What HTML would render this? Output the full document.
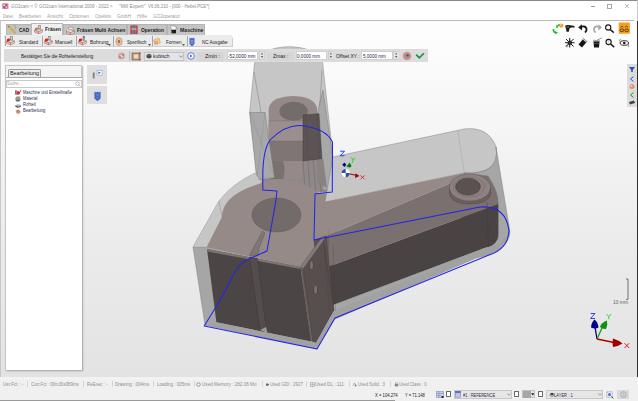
<!DOCTYPE html>
<html><head><meta charset="utf-8">
<style>
*{margin:0;padding:0;box-sizing:border-box}
html,body{width:638px;height:401px;overflow:hidden;background:#f0f0f0}
body{font-family:"Liberation Sans",sans-serif;position:relative;color:#333}
.a{position:absolute}
.t{position:absolute;white-space:nowrap;line-height:1;transform-origin:0 0}
.tab{position:absolute;top:24px;height:10.5px;background:#c4c4c4;border:0.7px solid #b4b4b4;border-bottom:none}
.sep{position:absolute;width:1px;background:#a8a8a8}
.ss{position:absolute;top:381px;width:1px;height:6px;background:#d6d6d6}
</style></head><body>
<!-- window top border -->
<div class="a" style="left:0;top:0;width:638px;height:1px;background:#8a8a8a"></div>
<div class="a" style="left:0;top:1px;width:638px;height:20px;background:#fff"></div>
<svg class="a" style="left:2.2px;top:2.5px" width="6.6" height="6.6" viewBox="0 0 6.6 6.6"><rect x="0" y="0" width="6.6" height="6.6" rx="1.2" fill="#e8a0a0"/><rect x="1.2" y="1.2" width="4.2" height="4.2" fill="#a050a0"/><rect x="1.5" y="1.6" width="1.6" height="1.4" fill="#fff"/><rect x="3.5" y="3.4" width="1.5" height="1.5" fill="#f0d0f0"/></svg>
<div class="a" style="left:591px;top:6px;width:4px;height:1px;background:#a0a0a0"></div>
<div class="a" style="left:607px;top:4px;width:5px;height:5px;border:1px solid #a8a8a8"></div>
<svg class="a" style="left:624px;top:3.3px" width="6" height="6" viewBox="0 0 6 6"><path d="M1,1 L5,5 M5,1 L1,5" stroke="#a0a0a0" stroke-width="0.7"/></svg>
<div class="a" style="left:636.5px;top:0;width:1px;height:21px;background:#c8c8c8"></div>
<div class="a" style="left:0;top:20px;width:634px;height:1.2px;background:#bcbcbc"></div>
<!-- VIEWPORT -->
<div class="a" style="left:1px;top:21px;width:636px;height:356px;background:linear-gradient(#fefefe 0%,#fafafa 15%,#ececec 60%,#e3e3e3 100%)"></div>
<div class="a" style="left:0;top:21px;width:1px;height:356px;background:#c8c8c8"></div>
<div class="a" style="left:637px;top:21px;width:1px;height:356px;background:#303030"></div>

<!-- 3D MODEL -->
<svg class="a" style="left:0;top:0" width="638" height="401" viewBox="0 0 638 401">
<g stroke-linejoin="round">
<!-- underlay -->
<path d="M258,182 L334,157 L340,250 L300,267 Z" fill="#968a89"/>
<!-- tower envelope -->
<path d="M249.7,112.5 L254,68 C254,40 323,40 323,66 L333,157 L331,195 L258,182 Z" fill="#c6c6c6" stroke="#7a7a7a" stroke-width="0.45"/>
<!-- tower brown boss -->
<path d="M268.7,121 L268.7,108 Q271,97 292,96 Q314,96 317,108 L317,180 L268.7,180 Z" fill="#958a89"/>
<ellipse cx="293.6" cy="111.3" rx="14.2" ry="9.5" fill="#746c6b"/>
<rect x="268.7" y="120.8" width="48.6" height="20.2" fill="#9a8f8e"/>
<rect x="268.7" y="141" width="48.6" height="20" fill="#7e7574"/>
<path d="M268.7,161 L317.3,161 L317.3,180 L268.7,180 Z" fill="#968a89"/>
<path d="M271,161 L283,161 Q286,170 283,180 L271,180 Z" fill="#7a706f"/>

<path d="M268.7,120.8 L317.3,120.8 M268.7,141 L317.3,141" stroke="#6f6564" stroke-width="0.4"/>
<path d="M262,179 L331,179 L331,193 L262,186 Z" fill="#8e8888"/>
<path d="M302,161 L331,157 L331,193 L302,190 Z" fill="#8e8888"/>
<path d="M303,161 L305,190 M308,161 L310,192 M313,160 L316,193 M318,160 L321,193" stroke="#5a5a5a" stroke-width="0.35"/>
<!-- tower side walls -->
<path d="M254,72 L265,135 M322,70 L319.5,112 M320,100 L325,160" stroke="#6a6a6a" stroke-width="0.4"/>
<path d="M249.7,112.5 L265,112.5 L274.6,177.7 L256.8,180 Z" fill="#a8a8a8" stroke="#6a6a6a" stroke-width="0.4"/>
<path d="M249.7,112.5 L274.6,177.7 M265,112.5 L256.8,180" stroke="#777" stroke-width="0.35" stroke-dasharray="1.2 0.8"/>
<path d="M317.3,113.7 L323,90 L332.7,157 L331,190 L323,190 Z" fill="#a8a8a8" stroke="#6a6a6a" stroke-width="0.4"/>
<path d="M303,114.9 L319,113.7 L322,158.7 L303,161 Z" fill="#5c5454" stroke="#3a3434" stroke-width="0.4"/>
<path d="M306,115 L308,160 M317,114 L319.5,159" stroke="#3a3434" stroke-width="0.3" stroke-dasharray="1 0.8"/>
<path d="M317.3,161 L323.2,158.7 L327,188 L317.3,182 Z" fill="#8a8282"/>

<!-- right arm envelope top face -->
<path d="M333,157 L464,129 Q488,126 496,146.8 Q498.5,160 490.5,167.3 Q482,174 464,173 L325,202 Z" fill="#c6c6c6" stroke="#7a7a7a" stroke-width="0.45"/>
<path d="M457.8,130.9 L464.3,173" stroke="#777" stroke-width="0.35" stroke-dasharray="1.2 0.8"/>
<!-- right arm brown faces -->
<path d="M464,174 Q482,175 490.5,168 L497,161 L500,240 L460,240 Z" fill="#7a706f"/>
<path d="M312,236 L334,228 L334,315 L312,315 Z" fill="#6d6261"/>
<path d="M312,194 L325,202 L329,235 L314,240 Z" fill="#968a89"/>
<path d="M325,202 L464,173 Q482,174 490.5,167.3 L492,172 L458,180 L329,235 Z" fill="#968a89"/>
<path d="M329,235 L458,180 L490,176 Q498,190 498.5,204 L329,266.4 Z" fill="#7a706f"/>
<path d="M329,266.4 L498.5,204 L498.5,234 Q498,246 485,248 L328,307 L322,290 Z" fill="#4a4343"/>
<path d="M487,202 L488.5,249" stroke="#3a3434" stroke-width="0.4"/>
<!-- arm end envelope side -->
<path d="M496,146.8 L510,232 Q508,252 476,258 L335,319 L328,307 L485,248 Q498.5,246 498.5,234 L498.5,204 Q498,190 488,176 L464,173 Q482,174 490.5,167.3 Q498.5,160 496,146.8 Z" fill="#a6a6a6" stroke="#7a7a7a" stroke-width="0.45"/>
<!-- right hub boss -->
<path d="M449.5,188 L449.5,195 Q453,204 470,204 Q487,204 490.5,195 L490.5,188 Z" fill="#6a5f5e" stroke="#4a4242" stroke-width="0.4"/>
<ellipse cx="470" cy="187.5" rx="20.5" ry="13.5" fill="#8e8281" stroke="#5a5050" stroke-width="0.45"/>
<ellipse cx="469" cy="187" rx="15.5" ry="10" fill="none" stroke="#6a6060" stroke-width="0.4"/>
<ellipse cx="468" cy="186.8" rx="12.5" ry="8.5" fill="#5a5251" stroke="#4a4242" stroke-width="0.45"/>

<!-- left block envelope -->
<path d="M193,247 L219,201 Q232,184 255,173 L262,183 L300,267 L311,341.5 L317,349 L205,325 Z" fill="#a6a6a6" stroke="#7a7a7a" stroke-width="0.45"/>
<path d="M219,201 Q232,184 255,173 L262,183.7 Q222,195 222,217 L206.7,247.3 L193,247.3 Z" fill="#c6c6c6"/>
<path d="M219,201 L222,217 M193,247.3 L206.7,247.3" stroke="#7a7a7a" stroke-width="0.4"/>
<!-- left block brown top face -->
<path d="M206.7,247.3 L222,217 Q222,195 260,183.4 Q270,180 285,180 Q318,184 326,205 Q330,215 323,236 L300,267 Z" fill="#968a89"/>
<ellipse cx="276.5" cy="215" rx="24.5" ry="17" fill="#736b6a" stroke="#5e5655" stroke-width="0.45"/>
<!-- front dark faces -->
<path d="M207,249 L300.4,267 L311,341.5 L216.4,322.3 Z" fill="#4c4545"/>
<path d="M207,249 L300.4,267 L300.6,269 L207.5,251.5 Z" fill="#7d7574"/>
<path d="M249.4,257 L257.5,258.5 L266,327 L260,330 Z" fill="#554d4d" stroke="#383232" stroke-width="0.4"/>
<path d="M260,330 L266,327 L267.5,333 Z" fill="#9a9a9a"/>
<path d="M249.5,255.5 L258,256 L259,248 L265,233 L262.5,231 Z" fill="#7f7776" stroke="#5a5252" stroke-width="0.45"/>
<path d="M314,240 L326,236 L334,311 L320,315 Z" fill="#5a5251" stroke="#3e3838" stroke-width="0.35"/>
<path d="M300.5,267 L323,236 L333.7,311 L316,343 L311,341 Z" fill="#574f4e" stroke="#3e3838" stroke-width="0.35"/>
<path d="M300.5,267 L323,236 L324.8,238.5 L303,268.8 Z" fill="#837979"/>
<ellipse cx="311.5" cy="265" rx="2" ry="4.5" fill="#7a7170" stroke="#2e2828" stroke-width="0.45"/>
<ellipse cx="315.6" cy="289.6" rx="2" ry="4.6" fill="#7a7170" stroke="#2e2828" stroke-width="0.45"/>
<path d="M304,270 L313,342 M324,243 L330,314 M333,245 L335.5,312" stroke="#3e3838" stroke-width="0.35" stroke-dasharray="1.2 0.8"/><path d="M301.5,268.5 L311.8,341" stroke="#8a8282" stroke-width="0.5"/>
<!-- bottom band -->
<path d="M205,325 L216.4,322.3 L311,341.5 L316,343 L333.7,311 L485,248 Q500,246 510,232 Q508,252 476,258 L335,319 L317,349 Z" fill="#a1a1a1"/>

<!-- blue contour -->
<path d="M204.2,326 L220.4,299.8 L236,270 Q241,262 250,258.5 L267,251 L276,200 L277,191 L262.8,190 L262.8,175 Q263,150 270,140 Q285,125 300,125.5 Q326,128 332.5,142 L332.3,192 L315,194 L314,240 L480,207 Q506,205 509,231 Q508,249 489,255 L335,318 L317,349 Z" fill="none" stroke="#2424e6" stroke-width="1.05"/>

<!-- gizmo -->
<g>
<path d="M350,174 L357,175.5" stroke="#b00000" stroke-width="1.1"/>
<path d="M355.5,173.2 L359.5,176 L355,178 Z" fill="#a00000"/>
<path d="M344.3,162.5 L346.4,164.7 L344.3,167 L342.3,164.7 Z" fill="#000080"/>
<path d="M347,167 L350,163" stroke="#008000" stroke-width="1.2"/>
<circle cx="349.6" cy="165.8" r="1.8" fill="#007a00"/>
<circle cx="345.7" cy="173.1" r="4.2" fill="#fff"/>
<path d="M345.7,173.1 L345.7,168.9 A4.2,4.2 0 0,0 341.5,173.1 Z" fill="#3050a0"/>
<path d="M345.7,173.1 L345.7,177.3 A4.2,4.2 0 0,0 349.9,173.1 Z" fill="#3050a0"/>
<path d="M340.2,151.2 L344.5,151.2 L340.2,155.8 L344.5,155.8" stroke="#2040ff" stroke-width="1" fill="none"/>
<path d="M351.2,157.5 L353.2,160 L355.2,157.5 M353.2,160 L352.2,163" stroke="#20d020" stroke-width="0.9" fill="none"/>
<path d="M360.5,175.3 L364.5,179.3 M364.5,175.3 L360.5,179.3" stroke="#e02020" stroke-width="0.9" fill="none"/>
</g>
</g>
</svg>

<!-- TABS -->
<div class="tab" style="left:5.5px;width:26px"></div>
<div class="a" style="left:31px;top:22.5px;width:32px;height:13px;background:#f0f0f0;border:1px solid #b8b8b8;border-bottom:none"></div>
<div class="tab" style="left:63px;width:64px"></div>
<div class="tab" style="left:127px;width:40px"></div>
<div class="tab" style="left:167.4px;width:37.3px"></div>
<svg class="a" style="left:7px;top:24.8px" width="10" height="10" viewBox="0 0 10 10"><path d="M1.5,2.2 L7.8,8.5 L8.8,7.5 L2.5,1.2 Z" fill="#f0c030" stroke="#906010" stroke-width="0.35"/><path d="M1.5,2.2 L0.6,0.6 L2.5,1.2 Z" fill="#e03020"/><path d="M6,1 L9,0.8 L8.2,4.5" fill="none" stroke="#999" stroke-width="0.7"/></svg>
<svg class="a" style="left:33.5px;top:24.8px" width="9" height="9.5" viewBox="0 0 9 9.5"><path d="M0.5,5 L4.5,3.5 L8.5,5 L4.5,6.8 Z" fill="#f6d8c8" stroke="#555" stroke-width="0.35"/><path d="M0.5,5 L4.5,6.8 L4.5,9 L0.5,7.2 Z" fill="#e8b8a4" stroke="#555" stroke-width="0.35"/><path d="M4.5,6.8 L8.5,5 L8.5,7.2 L4.5,9 Z" fill="#f0c8b4" stroke="#555" stroke-width="0.35"/><path d="M1,3 L3.8,2.2 L3.8,5 L1,5.8Z" fill="#b08070"/><rect x="4.8" y="0.4" width="1.8" height="3.6" fill="#c8c8d0" stroke="#444" stroke-width="0.35"/></svg>
<svg class="a" style="left:65.5px;top:25.5px" width="9" height="9.5" viewBox="0 0 9 9.5"><path d="M0.5,5 L4.5,3.5 L8.5,5 L4.5,6.8 Z" fill="#f6d8c8" stroke="#555" stroke-width="0.35"/><path d="M0.5,5 L4.5,6.8 L4.5,9 L0.5,7.2 Z" fill="#e8b8a4" stroke="#555" stroke-width="0.35"/><path d="M4.5,6.8 L8.5,5 L8.5,7.2 L4.5,9 Z" fill="#f0c8b4" stroke="#555" stroke-width="0.35"/><path d="M1,3 L3.8,2.2 L3.8,5 L1,5.8Z" fill="#f0c8b4"/><path d="M3,0.8 L7.5,2 L6.5,4 L2.5,3Z" fill="#eeeef4" stroke="#555" stroke-width="0.35"/></svg>
<svg class="a" style="left:129.5px;top:25px" width="8" height="9.5" viewBox="0 0 8 9.5"><rect x="0.8" y="0.8" width="6.4" height="8" fill="#d84040" stroke="#6a3030" stroke-width="0.4"/><path d="M2.5,0.8 L2.5,8.8 M4,0.8 L4,8.8 M5.5,0.8 L5.5,8.8" stroke="#6080d0" stroke-width="0.8"/><rect x="1.5" y="3.5" width="5" height="1" fill="#f0e060"/></svg>
<svg class="a" style="left:170px;top:25.3px" width="9" height="9" viewBox="0 0 9 9"><path d="M0.5,0.5 L6,1.5 L6,5 L1.5,5 Z" fill="#fafafa" stroke="#666" stroke-width="0.4"/><rect x="1.5" y="4.8" width="4.5" height="3.5" fill="#1a1a1a"/><path d="M6,2.5 L8,3.5" stroke="#888" stroke-width="0.5"/></svg>

<!-- TOOLBAR ROW -->
<div class="a" style="left:4px;top:34.8px;width:228.4px;height:11.4px;background:#ebebeb;box-shadow:0.6px 0.6px 0.8px rgba(0,0,0,.18)"></div>
<div class="sep" style="left:4.5px;top:36px;height:10px"></div>
<div class="sep" style="left:42.3px;top:36px;height:10px"></div>
<div class="sep" style="left:76px;top:36px;height:10px"></div>
<div class="sep" style="left:112.8px;top:36px;height:10px"></div>
<div class="sep" style="left:151.8px;top:36px;height:10px"></div>
<div class="sep" style="left:186.5px;top:36px;height:10px"></div>
<svg class="a" style="left:108px;top:44px" width="3" height="2" viewBox="0 0 3 2"><path d="M0,0 L3,0 L1.5,2Z" fill="#555"/></svg>
<svg class="a" style="left:147.5px;top:44px" width="3" height="2" viewBox="0 0 3 2"><path d="M0,0 L3,0 L1.5,2Z" fill="#555"/></svg>
<svg class="a" style="left:182px;top:44px" width="3" height="2" viewBox="0 0 3 2"><path d="M0,0 L3,0 L1.5,2Z" fill="#555"/></svg>
<svg class="a" style="left:5.5px;top:36.2px" width="9" height="9.5" viewBox="0 0 9 9.5"><path d="M0.5,5 L4.5,3.5 L8.5,5 L4.5,6.8 Z" fill="#f6d8c8" stroke="#555" stroke-width="0.35"/><path d="M0.5,5 L4.5,6.8 L4.5,9 L0.5,7.2 Z" fill="#e8b8a4" stroke="#555" stroke-width="0.35"/><path d="M4.5,6.8 L8.5,5 L8.5,7.2 L4.5,9 Z" fill="#f0c8b4" stroke="#555" stroke-width="0.35"/><path d="M1,3 L3.8,2.2 L3.8,5 L1,5.8Z" fill="#e01818"/><rect x="4.8" y="0.4" width="1.8" height="3.6" fill="#c8c8d0" stroke="#444" stroke-width="0.35"/></svg>
<svg class="a" style="left:43.5px;top:36.2px" width="9" height="9.5" viewBox="0 0 9 9.5"><path d="M0.5,5 L4.5,3.5 L8.5,5 L4.5,6.8 Z" fill="#f6d8c8" stroke="#555" stroke-width="0.35"/><path d="M0.5,5 L4.5,6.8 L4.5,9 L0.5,7.2 Z" fill="#e8b8a4" stroke="#555" stroke-width="0.35"/><path d="M4.5,6.8 L8.5,5 L8.5,7.2 L4.5,9 Z" fill="#f0c8b4" stroke="#555" stroke-width="0.35"/><path d="M1,3 L3.8,2.2 L3.8,5 L1,5.8Z" fill="#e01818"/><rect x="4.8" y="0.4" width="1.8" height="3.6" fill="#c8c8d0" stroke="#444" stroke-width="0.35"/></svg>
<svg class="a" style="left:78px;top:36.2px" width="9" height="9.5" viewBox="0 0 9 9.5"><path d="M0.5,5 L4.5,3.5 L8.5,5 L4.5,6.8 Z" fill="#f6d8c8" stroke="#555" stroke-width="0.35"/><path d="M0.5,5 L4.5,6.8 L4.5,9 L0.5,7.2 Z" fill="#e8b8a4" stroke="#555" stroke-width="0.35"/><path d="M4.5,6.8 L8.5,5 L8.5,7.2 L4.5,9 Z" fill="#f0c8b4" stroke="#555" stroke-width="0.35"/><path d="M1,3 L3.8,2.2 L3.8,5 L1,5.8Z" fill="#e01818"/><rect x="5" y="0.3" width="1.6" height="4" fill="#b0b0c0" stroke="#444" stroke-width="0.35"/><circle cx="5.8" cy="0.9" r="0.8" fill="#5070c0"/></svg>
<svg class="a" style="left:115px;top:37px" width="8" height="9" viewBox="0 0 8 9"><ellipse cx="4" cy="4.5" rx="3.2" ry="4" fill="#e8c0a0" stroke="#b08060" stroke-width="0.5"/><ellipse cx="4" cy="4.5" rx="1.2" ry="1.8" fill="#a07050"/></svg>
<svg class="a" style="left:153px;top:37px" width="8" height="9" viewBox="0 0 8 9"><path d="M0.5,3 L6,1 L7.5,6 L2,8 Z" fill="#f8d070" stroke="#c09040" stroke-width="0.4"/><rect x="1" y="4" width="4" height="3" fill="#e0a0a0"/></svg>
<svg class="a" style="left:188.5px;top:36.5px" width="6" height="10" viewBox="0 0 6 10"><path d="M0.5,0.5 L2,1.5 L3,0.5 L4,1.5 L5.5,0.5 L5.5,7 L3,9.5 L0.5,7 Z" fill="#4a68c8"/><path d="M2,3 L3,5 L4,3 M2,5.5 L3,7 L4,5.5" stroke="#cfd8f0" stroke-width="0.5" fill="none"/></svg>

<!-- GRAY BAR -->
<div class="a" style="left:4px;top:49px;width:424px;height:12.6px;background:#dcdcdc"></div>
<svg class="a" style="left:117px;top:51.5px" width="9" height="8" viewBox="0 0 9 8"><circle cx="4.5" cy="4" r="3.5" fill="#d8a898"/><path d="M2,5 L6,2 L7,3 L3,6Z" fill="#5060b0"/><circle cx="4.5" cy="4" r="1.2" fill="#f0e0d0"/></svg>
<div class="sep" style="left:128.7px;top:51px;height:10px;background:#b8b8b8"></div>
<svg class="a" style="left:131px;top:51.5px" width="10" height="9" viewBox="0 0 10 9"><rect x="1" y="1" width="8" height="7" fill="#caa080" stroke="#444" stroke-width="0.6"/><rect x="3" y="2.5" width="4" height="4" fill="#eed8b8"/><circle cx="8.8" cy="1.2" r="0.8" fill="#e02020"/><circle cx="8.8" cy="7.8" r="0.8" fill="#e02020"/></svg>
<div class="a" style="left:143.6px;top:51.5px;width:40.3px;height:9.4px;background:#e4e4e4;border:0.6px solid #c4c4c4"></div>
<svg class="a" style="left:146px;top:53px" width="6" height="6" viewBox="0 0 6 6"><path d="M0.5,2 L3,0.8 L5.5,2 L5.5,4.5 L3,5.5 L0.5,4.5Z" fill="#444"/><path d="M0.5,2 L3,3 L5.5,2" stroke="#aaa" stroke-width="0.4" fill="none"/></svg>
<svg class="a" style="left:178.5px;top:54.5px" width="4" height="3" viewBox="0 0 4 3"><path d="M0.3,0.5 L2,2.3 L3.7,0.5" stroke="#555" stroke-width="0.6" fill="none"/></svg>
<svg class="a" style="left:186.5px;top:51.7px" width="8" height="8" viewBox="0 0 8 8"><circle cx="4" cy="4" r="3.3" fill="#fff" stroke="#5070c8" stroke-width="0.9"/><path d="M3,2.3 L5.5,4 L3,5.7Z" fill="#5070c8"/></svg>
<div class="a" style="left:197.8px;top:51.5px;width:26px;height:9.4px;background:#d6d6d6"></div>
<div class="a" style="left:227.3px;top:51.4px;width:31.2px;height:8.2px;background:#fff;border:0.5px solid #cfcfcf"></div>
<svg class="a" style="left:258.5px;top:51.3px" width="6.1" height="8.4" viewBox="0 0 6.1 8.4"><rect x="0.25" y="0.25" width="5.6" height="7.9" fill="#e6e6e6" stroke="#b8b8b8" stroke-width="0.5"/><path d="M1.9499999999999997,3.3 L3.05,1.9 L4.15,3.3Z M1.9499999999999997,5.3 L3.05,6.7 L4.15,5.3Z" fill="#222"/></svg>
<div class="a" style="left:267px;top:51.5px;width:27.4px;height:9.4px;background:#d6d6d6"></div>
<div class="a" style="left:296.3px;top:51.4px;width:31.2px;height:8.2px;background:#fff;border:0.5px solid #cfcfcf"></div>
<svg class="a" style="left:327.5px;top:51.3px" width="5.8" height="8.4" viewBox="0 0 5.8 8.4"><rect x="0.25" y="0.25" width="5.3" height="7.9" fill="#e6e6e6" stroke="#b8b8b8" stroke-width="0.5"/><path d="M1.7999999999999998,3.3 L2.9,1.9 L4.0,3.3Z M1.7999999999999998,5.3 L2.9,6.7 L4.0,5.3Z" fill="#222"/></svg>
<div class="a" style="left:360.9px;top:51.4px;width:31.7px;height:8.2px;background:#fff;border:0.5px solid #cfcfcf"></div>
<svg class="a" style="left:392.6px;top:51.3px" width="6.5" height="8.4" viewBox="0 0 6.5 8.4"><rect x="0.25" y="0.25" width="6.0" height="7.9" fill="#e6e6e6" stroke="#b8b8b8" stroke-width="0.5"/><path d="M2.15,3.3 L3.25,1.9 L4.35,3.3Z M2.15,5.3 L3.25,6.7 L4.35,5.3Z" fill="#222"/></svg>
<svg class="a" style="left:402.3px;top:50.6px" width="10" height="10" viewBox="0 0 10 10"><circle cx="5" cy="5" r="3.7" fill="#9a9a9a" stroke="#ee8a8a" stroke-width="1.3"/><circle cx="5.6" cy="4.4" r="1.2" fill="#555"/></svg>
<svg class="a" style="left:415px;top:52px" width="10" height="7" viewBox="0 0 10 7"><path d="M1.2,2.6 L4.3,5.8 L8.9,1.2" stroke="#109040" stroke-width="1.6" fill="none"/></svg>

<!-- LEFT PANEL -->
<div class="a" style="left:4.7px;top:64.5px;width:77.6px;height:305.3px;background:#f4f4f4;border:0.5px solid #c4c4c4;box-shadow:1px 1px 1.5px rgba(0,0,0,.3)"></div>
<div class="a" style="left:5.5px;top:77.2px;width:76.6px;height:292.4px;background:#fff;border-top:0.8px solid #a8a8a8"></div>
<div class="a" style="left:7.8px;top:69.4px;width:33.7px;height:8px;background:#ededed;border:0.6px solid #9a9a9a;border-bottom:none;border-radius:1.5px 1.5px 0 0"></div>
<div class="a" style="left:6px;top:79.5px;width:76px;height:8px;background:#fff;border:0.6px solid #c8c8c8"></div>
<svg class="a" style="left:74.5px;top:80.5px" width="6" height="6" viewBox="0 0 6 6"><circle cx="2.5" cy="2.5" r="1.8" fill="none" stroke="#999" stroke-width="0.6"/><path d="M3.8,3.8 L5.5,5.5" stroke="#999" stroke-width="0.7"/></svg>
<svg class="a" style="left:14.9px;top:88.5px" width="7" height="26" viewBox="0 0 7 26">
<rect x="0.3" y="1.3" width="1.3" height="4.3" fill="#444"/><rect x="1.6" y="4.3" width="3" height="1.3" fill="#555"/>
<path d="M2,2.5 Q3,1.5 4.5,3 L6,0.6 L6.4,1.2 L5,3.8 Q4.8,5.3 3,5 Q1.8,4.3 2,2.5Z" fill="#e81818"/>
<circle cx="2.9" cy="9.8" r="2.6" fill="#8a9ab8"/><path d="M1.3,10.3 L4,8 L5.6,7 L4.6,9.5 Z" fill="#f09018"/><ellipse cx="2.9" cy="11.6" rx="2.2" ry="0.9" fill="#5a6a8a"/>
<path d="M0.4,16.3 L3.2,15 L6,16.3 L3.2,17.6Z" fill="#b8b8b8"/><path d="M0.4,16.3 L3.2,17.6 L3.2,19 L0.4,17.7Z" fill="#505050"/><path d="M3.2,17.6 L6,16.3 L6,17.7 L3.2,19Z" fill="#6a6a6a"/>
<path d="M0.6,22 L2.5,20.5 L4.5,21 L5.8,23 L4,25 L1.5,24.5Z" fill="#d8a088"/><path d="M2,21 L3,23.5 M3.5,21 L4.5,23.5" stroke="#8a5a4a" stroke-width="0.5"/>
</svg>

<!-- SIDE BUTTONS -->
<div class="a" style="left:86.9px;top:65.4px;width:20.1px;height:19px;background:#dedede"></div>
<div class="a" style="left:86.9px;top:86.1px;width:20.1px;height:18.4px;background:#dedede"></div>
<svg class="a" style="left:91px;top:69px" width="12" height="11" viewBox="0 0 12 11"><rect x="6" y="1.5" width="5" height="4.6" fill="#fff" stroke="#8090c0" stroke-width="0.5"/><path d="M7.3,2.4 L9.8,3.8 L7.3,5.2Z" fill="#3a5ac8"/><rect x="1.6" y="3.3" width="2.3" height="6.3" fill="#a8a8a8"/><rect x="2.2" y="4" width="1" height="5" fill="#777"/></svg>
<svg class="a" style="left:93.5px;top:90.5px" width="7" height="10.5" viewBox="0 0 7 10.5"><path d="M0.4,0.4 L2.2,1.4 L3.5,0.4 L4.8,1.4 L6.6,0.4 L6.6,7.6 L3.5,10.2 L0.4,7.6 Z" fill="#4a64c0"/><path d="M2.2,3 L3.5,4.8 L4.8,3 M2.2,5.6 L3.5,7.2 L4.8,5.6" stroke="#9fb0e8" stroke-width="0.5" fill="none"/></svg>

<!-- RIGHT TOP ICONS -->
<svg class="a" style="left:550px;top:20px" width="88" height="30" viewBox="550 20 88 30">
<path d="M553.5,29 Q553,32.5 556.5,32.8" stroke="#18c030" stroke-width="1.8" fill="none"/><path d="M556,32.8 L555,31 L558,32.5 L555.5,34.5Z" fill="#18c030"/>
<path d="M557.5,26 Q559,24 561,25.5" stroke="#18c030" stroke-width="1.6" fill="none"/><path d="M556.5,24.5 L558.5,27.5 L556,28Z" fill="#18c030"/>
<circle cx="561.2" cy="25.6" r="2.1" fill="#f09a20"/><circle cx="560.8" cy="25" r="0.8" fill="#ffe0b0"/>
<path d="M565.3,25.8 Q566,24.8 568,24.9 L572,25.6 L574.5,26 L574.5,27.5 L571,27.6 L569.5,28.5 L568.8,31.8 L566.5,31.8 L566,28.5 Q565,27.5 565.3,25.8Z" fill="#1a1a1a"/><path d="M567,26.2 L567,28 M568.3,26.2 L568.3,28" stroke="#ddd" stroke-width="0.4"/>
<path d="M580,27.5 Q585,25 586.5,28.5 Q587,31 585,32.5" stroke="#151515" stroke-width="1.8" fill="none"/><path d="M578.2,27.5 L581.8,24.2 L582.2,30.5Z" fill="#151515"/>
<path d="M600.5,27.5 Q595.5,25 594,28.5 Q593.5,31 595.5,32.5" stroke="#a8a8a8" stroke-width="1.8" fill="none"/><path d="M602,27.5 L598.5,24.2 L598.2,30.5Z" fill="#a8a8a8"/>
<circle cx="608.2" cy="27.5" r="2.6" fill="none" stroke="#1a1a1a" stroke-width="1.1"/><path d="M610.3,29.6 L613.8,32.6" stroke="#1a1a1a" stroke-width="1.4"/>
<rect x="618.7" y="22.6" width="11.2" height="11.2" rx="0.8" fill="#f2a01e"/>
<path d="M620.5,27.5 Q622,25 623.5,27.2 M625,27.2 Q626.5,25 628,27.5" stroke="#3a2a10" stroke-width="0.7" fill="none"/>
<ellipse cx="621.9" cy="30.3" rx="1.9" ry="1.3" fill="none" stroke="#3a2a10" stroke-width="0.8"/><ellipse cx="626.7" cy="30.3" rx="1.9" ry="1.3" fill="none" stroke="#3a2a10" stroke-width="0.8"/>
<path d="M566,39 L573.5,46.5 M573.5,39 L566,46.5 M569.7,38 L569.7,47.5 M565,42.7 L574.5,42.7" stroke="#1a1a1a" stroke-width="1"/><circle cx="569.7" cy="42.7" r="2.2" fill="#2a2a2a"/><circle cx="567" cy="46" r="1" fill="none" stroke="#555" stroke-width="0.5"/>
<path d="M578.5,44.5 L583.5,38.5 L587,41.5 L582,47.5 Z" fill="#151515"/><path d="M583.5,38.5 L587,41.5 L586.2,42.5 L582.7,39.5Z" fill="#fff" stroke="#333" stroke-width="0.4"/>
<path d="M593.5,41.5 L599.5,41.5 L599,47.5 L594,47.5Z" fill="#151515"/><path d="M593.5,43.5 L599.5,43.5" stroke="#888" stroke-width="0.5"/><path d="M593,41 L600,41" stroke="#333" stroke-width="0.6"/>
<path d="M596.5,40.5 L601.8,37.8" stroke="#333" stroke-width="0.5"/><path d="M594,39.5 L595.5,40.5" stroke="#555" stroke-width="0.4"/>
<circle cx="608.6" cy="42" r="2.6" fill="none" stroke="#1a1a1a" stroke-width="1.1"/><path d="M610.7,44.1 L614.2,47.1" stroke="#1a1a1a" stroke-width="1.4"/><path d="M608.6,40.5 L608.6,42.5" stroke="#999" stroke-width="0.5"/>
<ellipse cx="624.3" cy="43" rx="4.2" ry="2.3" fill="none" stroke="#1a1a1a" stroke-width="0.9"/><circle cx="624.3" cy="43" r="1.3" fill="#1a1a1a"/><path d="M620.5,39 Q619,41 620.5,42 M628,44 Q629.5,45.5 628,47" stroke="#333" stroke-width="0.6" fill="none"/>
</svg>

<!-- RIGHT STRIP -->
<div class="a" style="left:627px;top:64px;width:9.7px;height:42.6px;background:#dcdcdc"></div>
<svg class="a" style="left:627px;top:64px" width="10" height="43" viewBox="0 0 10 43">
<path d="M2,3 L8,3 L5.8,6 L5.8,8 L4.2,8 L4.2,6 Z" fill="#3050c0"/>
<path d="M6.5,12.5 L3.5,15 L6.5,17.5" stroke="#3050c0" stroke-width="1" fill="none"/>
<circle cx="5" cy="22.5" r="2.5" fill="#e09070"/><circle cx="4.5" cy="22" r="1" fill="#fce"/>
<path d="M6.5,28.5 L3.5,31 L6.5,33.5" stroke="#10a030" stroke-width="1" fill="none"/>
<path d="M2,38 L7,36.5 L8,39 L3,40.5Z" fill="#444"/>
</svg>

<!-- SCALE BAR + AXES -->
<svg class="a" style="left:580px;top:270px" width="58" height="90" viewBox="580 270 58 90">
<path d="M626,279 L628,279 L628,299.4 L626,299.4" stroke="#555" stroke-width="0.8" fill="none"/>
<line x1="597" y1="339" x2="595" y2="327" stroke="#00008b" stroke-width="1.3"/>
<path d="M591,327.5 Q591.5,322 594.5,319.5 Q598,322 598.5,327.5 Q595,329.5 591,327.5Z" fill="#00008b"/>
<line x1="597" y1="339" x2="602.5" y2="327" stroke="#10a010" stroke-width="1.3"/>
<path d="M600,327 Q601,322.5 607,320.5 Q608,325 606,329 Q603,329.5 600,327Z" fill="#109010"/>
<line x1="597" y1="339" x2="614" y2="342.5" stroke="#b00000" stroke-width="1.3"/>
<path d="M613,338.5 Q618,340 622.5,343.5 Q618,346.5 613,347 Q612,343 613,338.5Z" fill="#a00000"/>
<path d="M590.5,313.5 L595,313.5 L590.5,318.5 L595,318.5" stroke="#2030e8" stroke-width="0.9" fill="none"/>
<path d="M606.5,314 L608.8,316.6 L611,314 M608.8,316.6 L608.8,319.2" stroke="#20d020" stroke-width="0.9" fill="none"/>
<path d="M624.5,343.2 L629.2,348 M629.2,343.2 L624.5,348" stroke="#e02020" stroke-width="1" fill="none"/>
</svg>

<!-- STATUS BAR -->
<div class="a" style="left:0;top:377.8px;width:638px;height:23.2px;background:#f0f0f0;border-top:0.6px solid #f4f4f4"></div>
<div class="a" style="left:0;top:400px;width:395px;height:1px;background:#9a9a9a"></div>
<div class="ss" style="left:26.8px"></div><div class="ss" style="left:82.7px"></div><div class="ss" style="left:111.5px"></div><div class="ss" style="left:152.9px"></div><div class="ss" style="left:193.8px"></div>
<div class="ss" style="left:262px"></div><div class="ss" style="left:306px"></div><div class="ss" style="left:348.8px"></div><div class="ss" style="left:390px"></div>
<svg class="a" style="left:196px;top:381.5px" width="5" height="5" viewBox="0 0 5 5"><circle cx="2.5" cy="2.5" r="1.8" fill="none" stroke="#777" stroke-width="0.7"/></svg>
<svg class="a" style="left:264.5px;top:381.5px" width="5" height="5" viewBox="0 0 5 5"><path d="M1,1.5 L3,1.5 L4.2,2.5 L3,3.8 L1,3.8Z" fill="#666"/></svg>
<svg class="a" style="left:309.5px;top:381.5px" width="5" height="5" viewBox="0 0 5 5"><rect x="0.5" y="0.8" width="4" height="3.5" fill="none" stroke="#888" stroke-width="0.5"/><path d="M0.5,2.5 L4.5,2.5 M2.5,0.8 L2.5,4.3" stroke="#888" stroke-width="0.4"/></svg>
<svg class="a" style="left:352px;top:381.5px" width="5" height="5" viewBox="0 0 5 5"><path d="M0.8,3.5 L2.5,1 L4.2,3.5" fill="none" stroke="#888" stroke-width="0.6"/><circle cx="3.5" cy="3.5" r="1" fill="#888"/></svg>
<svg class="a" style="left:393.5px;top:381.5px" width="5" height="5" viewBox="0 0 5 5"><rect x="0.8" y="1.8" width="3.4" height="2.6" fill="#888"/><path d="M1.5,1.8 L1.5,0.8 L3.5,0.8 L3.5,1.8" stroke="#888" stroke-width="0.5" fill="none"/></svg>
<!-- row 2 -->
<svg class="a" style="left:435.5px;top:390.8px" width="8" height="7.2" viewBox="0 0 8 7.2"><rect x="0.3" y="0.3" width="7.4" height="6.6" fill="#c8d0e8" stroke="#6070a0" stroke-width="0.4"/><path d="M0.5,2.5 L7.5,2.5 M0.5,4.5 L5,4.5 M3,0.5 L3,7" stroke="#6070a0" stroke-width="0.4"/><rect x="5.5" y="5" width="2" height="2" fill="#222"/></svg>
<div class="a" style="left:446px;top:391px;width:5px;height:6px;background:#fff;border:0.5px solid #6a6a6a;border-radius:0.5px"></div>
<div class="a" style="left:453.5px;top:390px;width:58px;height:8.7px;background:#e6e6e6;border:0.6px solid #c8c8c8"></div>
<svg class="a" style="left:455px;top:391px" width="6" height="6.5" viewBox="0 0 6 6.5"><rect x="0.3" y="0.3" width="5.4" height="5.9" fill="#b8c4e8" stroke="#5060a0" stroke-width="0.4"/><rect x="0.3" y="0.3" width="5.4" height="1.5" fill="#5060a0"/></svg>
<svg class="a" style="left:506.5px;top:393px" width="4" height="3" viewBox="0 0 4 3"><path d="M0.3,0.5 L2,2.3 L3.7,0.5" stroke="#666" stroke-width="0.6" fill="none"/></svg>
<div class="a" style="left:513.9px;top:391px;width:5.4px;height:6px;background:#fff;border:0.5px solid #6a6a6a;border-radius:0.5px"></div>
<div class="a" style="left:522.2px;top:390.2px;width:12.5px;height:8.3px;background:#e8e8e8;border:0.5px solid #c0c0c0"></div>
<div class="a" style="left:522.8px;top:390.8px;width:8px;height:7px;background:#a6a6a6"></div>
<svg class="a" style="left:530.8px;top:393px" width="3.5" height="3" viewBox="0 0 3.5 3"><path d="M0,0.3 L3.5,0.3 L1.75,2.5Z" fill="#222"/></svg>
<div class="a" style="left:537.5px;top:391px;width:5.4px;height:6px;background:#fff;border:0.5px solid #6a6a6a;border-radius:0.5px"></div>
<div class="a" style="left:545.7px;top:390px;width:57.6px;height:8.7px;background:#e6e6e6;border:0.6px solid #c8c8c8"></div>
<svg class="a" style="left:548.5px;top:391.5px" width="6" height="6" viewBox="0 0 6 6"><path d="M0.5,2 L3,0.8 L5.5,2 L3,3.2Z" fill="#333"/><path d="M0.5,3.2 L3,4.4 L5.5,3.2" stroke="#333" stroke-width="0.6" fill="none"/></svg>
<svg class="a" style="left:598px;top:393px" width="4" height="3" viewBox="0 0 4 3"><path d="M0.3,0.5 L2,2.3 L3.7,0.5" stroke="#666" stroke-width="0.6" fill="none"/></svg>
<svg class="a" style="left:606px;top:390.5px" width="8" height="8" viewBox="0 0 8 8"><rect x="0.8" y="0.8" width="5.5" height="5.5" fill="none" stroke="#5070c0" stroke-width="0.6" stroke-dasharray="1 0.6"/><circle cx="3.5" cy="3.5" r="1.5" fill="#5070c0"/><path d="M5.5,5.5 L7.5,7.5" stroke="#333" stroke-width="0.8"/></svg>
<div class="a" style="left:617px;top:390px;width:12px;height:8.5px;background:#d8d8d8;border-radius:1px"></div>
<svg class="a" style="left:619.5px;top:390.7px" width="7" height="7" viewBox="0 0 7 7"><circle cx="3.5" cy="3.5" r="2.8" fill="none" stroke="#999" stroke-width="0.7"/><path d="M2.8,2 L4.5,3.5 L2.8,5" stroke="#999" stroke-width="0.7" fill="none"/></svg>

<div class="t" style="left:10.80px;top:4.81px;font-size:4.8px;color:#8c8c8c;transform:scaleX(0.945);">GO2cam &lt; © GO2cam International 2009 - 2022 &gt;</div>
<div class="t" style="left:118.60px;top:4.81px;font-size:4.8px;color:#8c8c8c;transform:scaleX(1.023);">&quot;Mill Expert&quot;</div>
<div class="t" style="left:148.30px;top:4.81px;font-size:4.8px;color:#8c8c8c;transform:scaleX(0.917);">V6.06.210 - [000 - Hebel.PCE*]</div>
<div class="t" style="left:2.80px;top:14.71px;font-size:4.8px;color:#a0a0a0;transform:scaleX(0.901);">Datei</div>
<div class="t" style="left:19.00px;top:14.71px;font-size:4.8px;color:#a0a0a0;transform:scaleX(0.948);">Bearbeiten</div>
<div class="t" style="left:47.00px;top:14.71px;font-size:4.8px;color:#a0a0a0;transform:scaleX(1.016);">Ansicht</div>
<div class="t" style="left:69.00px;top:14.71px;font-size:4.8px;color:#a0a0a0;transform:scaleX(1.027);">Optionen</div>
<div class="t" style="left:95.00px;top:14.71px;font-size:4.8px;color:#a0a0a0;transform:scaleX(0.923);">Opelists</div>
<div class="t" style="left:117.00px;top:14.71px;font-size:4.8px;color:#a0a0a0;transform:scaleX(1.010);">GmbH</div>
<div class="t" style="left:137.00px;top:14.71px;font-size:4.8px;color:#a0a0a0;transform:scaleX(1.041);">Hilfe</div>
<div class="t" style="left:153.00px;top:14.71px;font-size:4.8px;color:#a0a0a0;transform:scaleX(0.964);">GO2operator</div>
<div class="t" style="left:19.30px;top:27.70px;font-size:5.0px;color:#1e1e1e;font-weight:bold;transform:scaleX(0.923);">CAD</div>
<div class="t" style="left:45.00px;top:26.50px;font-size:5.0px;color:#1e1e1e;font-weight:bold;transform:scaleX(0.976);">Fräsen</div>
<div class="t" style="left:76.50px;top:27.70px;font-size:5.0px;color:#1e1e1e;font-weight:bold;transform:scaleX(0.992);">Fräsen Multi Achsen</div>
<div class="t" style="left:140.70px;top:27.70px;font-size:5.0px;color:#1e1e1e;font-weight:bold;transform:scaleX(0.978);">Operation</div>
<div class="t" style="left:180.00px;top:27.70px;font-size:5.0px;color:#1e1e1e;font-weight:bold;transform:scaleX(1.027);">Maschine</div>
<div class="t" style="left:19.00px;top:39.70px;font-size:5.0px;color:#1a1a1a;transform:scaleX(0.936);">Standard</div>
<div class="t" style="left:55.00px;top:39.70px;font-size:5.0px;color:#1a1a1a;transform:scaleX(0.994);">Manuell</div>
<div class="t" style="left:90.00px;top:39.70px;font-size:5.0px;color:#1a1a1a;transform:scaleX(0.984);">Bohrung</div>
<div class="t" style="left:127.30px;top:39.70px;font-size:5.0px;color:#1a1a1a;transform:scaleX(0.851);">Spezifisch</div>
<div class="t" style="left:166.00px;top:39.70px;font-size:5.0px;color:#1a1a1a;transform:scaleX(0.894);">Formen</div>
<div class="t" style="left:201.80px;top:39.70px;font-size:5.0px;color:#1a1a1a;transform:scaleX(0.908);">NC Ausgabe</div>
<div class="t" style="left:21.40px;top:53.80px;font-size:5.0px;color:#1a1a1a;transform:scaleX(0.904);">Bestätigen Sie die Rohteilenstellung</div>
<div class="t" style="left:152.50px;top:54.40px;font-size:5.0px;color:#1a1a3a;transform:scaleX(0.973);">kubisch</div>
<div class="t" style="left:204.90px;top:54.29px;font-size:5.2px;color:#1a1a1a;transform:scaleX(1.031);">Zmin :</div>
<div class="t" style="left:228.40px;top:54.40px;font-size:5.0px;color:#1a1a3a;transform:scaleX(0.930);">-52,0000 mm</div>
<div class="t" style="left:272.60px;top:54.29px;font-size:5.2px;color:#1a1a1a;transform:scaleX(0.969);">Zmax :</div>
<div class="t" style="left:296.70px;top:54.40px;font-size:5.0px;color:#1a1a3a;transform:scaleX(0.920);">0,0000 mm</div>
<div class="t" style="left:336.30px;top:54.40px;font-size:5.0px;color:#1a1a1a;transform:scaleX(0.988);">Offset XY :</div>
<div class="t" style="left:362.50px;top:54.40px;font-size:5.0px;color:#1a1a3a;transform:scaleX(0.916);">5,0000 mm</div>
<div class="t" style="left:10.20px;top:71.86px;font-size:4.9px;color:#1a1a1a;transform:scaleX(1.097);">Bearbeitung</div>
<div class="t" style="left:7.00px;top:81.92px;font-size:4.6px;color:#a0a0a0;transform:scaleX(0.881);">Suche....</div>
<div class="t" style="left:23.10px;top:90.72px;font-size:4.6px;color:#2c2c50;transform:scaleX(0.867);">Maschine und Einstellmaße</div>
<div class="t" style="left:23.10px;top:96.92px;font-size:4.6px;color:#2c2c50;transform:scaleX(0.886);">Material</div>
<div class="t" style="left:23.10px;top:103.22px;font-size:4.6px;color:#2c2c50;transform:scaleX(0.880);">Rohteil</div>
<div class="t" style="left:23.10px;top:109.42px;font-size:4.6px;color:#2c2c50;transform:scaleX(0.903);">Bearbeitung</div>
<div class="t" style="left:3.00px;top:383.31px;font-size:4.8px;color:#8e8e8e;transform:scaleX(0.962);">Usr.Fct : -</div>
<div class="t" style="left:30.60px;top:383.31px;font-size:4.8px;color:#8e8e8e;transform:scaleX(0.910);">Curr.Fct : 00m30s959ms</div>
<div class="t" style="left:86.50px;top:383.31px;font-size:4.8px;color:#8e8e8e;transform:scaleX(0.928);">ReExec : -</div>
<div class="t" style="left:114.80px;top:383.31px;font-size:4.8px;color:#8e8e8e;transform:scaleX(0.950);">Drawing : 004ms</div>
<div class="t" style="left:156.60px;top:383.31px;font-size:4.8px;color:#8e8e8e;transform:scaleX(0.941);">Loading : 005ms</div>
<div class="t" style="left:202.00px;top:383.31px;font-size:4.8px;color:#8e8e8e;transform:scaleX(0.964);">Used Memory : 282.06 Mo</div>
<div class="t" style="left:270.00px;top:383.31px;font-size:4.8px;color:#8e8e8e;transform:scaleX(0.920);">Used GDI : 2927</div>
<div class="t" style="left:315.00px;top:383.31px;font-size:4.8px;color:#8e8e8e;transform:scaleX(0.967);">Used DL : 111</div>
<div class="t" style="left:358.00px;top:383.31px;font-size:4.8px;color:#8e8e8e;transform:scaleX(0.904);">Used Solid : 3</div>
<div class="t" style="left:399.00px;top:383.31px;font-size:4.8px;color:#8e8e8e;transform:scaleX(0.881);">Used Class : 0</div>
<div class="t" style="left:375.00px;top:393.40px;font-size:5.0px;color:#222;transform:scaleX(0.837);">X = 104.274</div>
<div class="t" style="left:405.00px;top:393.40px;font-size:5.0px;color:#222;transform:scaleX(0.817);">Y = 71.148</div>
<div class="t" style="left:463.00px;top:393.40px;font-size:5.0px;color:#2a2a4a;transform:scaleX(0.789);">#1 : REFERENCE</div>
<div class="t" style="left:554.00px;top:393.40px;font-size:5.0px;color:#2a2a4a;transform:scaleX(0.814);">LAYER : 1</div>
<div class="t" style="left:612.70px;top:300.71px;font-size:4.8px;color:#666;transform:scaleX(1.022);">10 mm</div>
</body></html>
